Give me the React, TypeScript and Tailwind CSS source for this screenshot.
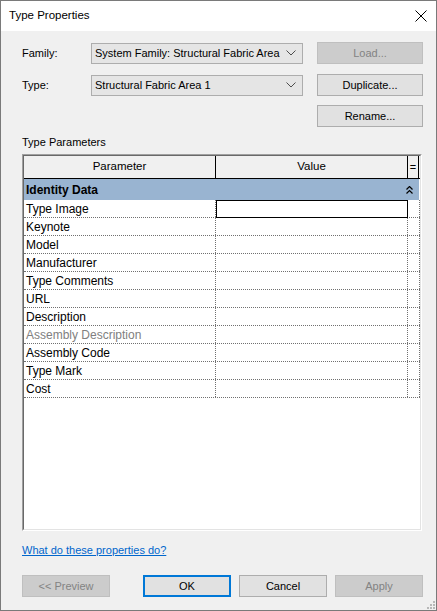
import React from 'react';

const font = { fontFamily: '"Liberation Sans", Arial, sans-serif' };

const rows = [
  'Type Image',
  'Keynote',
  'Model',
  'Manufacturer',
  'Type Comments',
  'URL',
  'Description',
  'Assembly Description',
  'Assembly Code',
  'Type Mark',
  'Cost',
];

const Chevron = () => (
  <svg width="10" height="6" viewBox="0 0 10 6" className="shrink-0">
    <path d="M0.5 0.5 L5 5 L9.5 0.5" fill="none" stroke="#4d4d4d" strokeWidth="1" />
  </svg>
);

const Combo = ({ value }: { value: string }) => (
  <div className="flex h-[21px] w-[212px] items-center justify-between border border-[#adadad] bg-[#e5e5e5] pl-[3px] pr-[6px] text-[11px] text-black">
    <span className="truncate">{value}</span>
    <Chevron />
  </div>
);

const Btn = ({
  label,
  disabled,
  primary,
  className = '',
}: {
  label: string;
  disabled?: boolean;
  primary?: boolean;
  className?: string;
}) => (
  <div
    className={`flex h-[22px] items-center justify-center text-[11px] ${
      disabled
        ? 'border border-[#bfbfbf] bg-[#cccccc] text-[#838383]'
        : primary
        ? 'border-2 border-[#0078d7] bg-[#e1e1e1] text-black'
        : 'border border-[#adadad] bg-[#e1e1e1] text-black'
    } ${className}`}
  >
    {label}
  </div>
);

export default function App() {
  return (
    <div
      className="flex h-[611px] w-[437px] flex-col border border-[#7a7a7a] bg-[#f0f0f0] text-[11px] text-black"
      style={font}
    >
      {/* title bar */}
      <div className="flex h-[30px] shrink-0 items-center justify-between bg-white pl-[8px] pr-[8px]">
        <span className="text-[11.5px]">Type Properties</span>
        <svg width="12" height="12" viewBox="0 0 12 12" className="mr-[1px]">
          <path d="M0.5 0.5 L11.5 11.5 M11.5 0.5 L0.5 11.5" stroke="#000" strokeWidth="1" />
        </svg>
      </div>

      <div className="flex flex-1 flex-col pl-[21px] pr-[13px] pt-[11px]">
        {/* family / type rows */}
        <div className="flex h-[22px] items-center">
          <span className="w-[69px]">Family:</span>
          <Combo value="System Family: Structural Fabric Area" />
          <Btn label="Load..." disabled className="ml-[14px] w-[106px]" />
        </div>
        <div className="mt-[10px] flex h-[22px] items-center">
          <span className="w-[69px]">Type:</span>
          <Combo value="Structural Fabric Area 1" />
          <Btn label="Duplicate..." className="ml-[14px] w-[106px]" />
        </div>
        <div className="mt-[9px] flex h-[22px] justify-end">
          <Btn label="Rename..." className="w-[106px]" />
        </div>

        <div className="mt-[7px] h-[16px] leading-[16px]">Type Parameters</div>

        {/* parameter grid */}
        <div className="mt-[4px] flex h-[377px] w-[400px] flex-col border border-t-[#a0a0a0] border-l-[#a0a0a0] border-r-white border-b-white">
          <div className="flex flex-1 flex-col border border-t-[#696969] border-l-[#696969] border-r-[#e3e3e3] border-b-[#e3e3e3] bg-white text-[12px]">
            <div className="flex h-[23px] border-b border-black bg-[#f0f0f0] text-[11.5px]">
              <div className="flex w-[192px] items-center justify-center border-r border-black">Parameter</div>
              <div className="flex w-[192px] items-center justify-center border-r border-black">Value</div>
              <div className="flex w-[11px] items-center justify-center border-r border-black text-[11px]">=</div>
            </div>
            <div className="flex h-[21px] w-[395px] items-center justify-between bg-[#99b4d1] pl-[2px] pr-[6px] font-bold">
              <span>Identity Data</span>
              <svg width="7" height="8" viewBox="0 0 7 8">
                <path d="M0.5 3.5 L3.5 0.5 L6.5 3.5 M0.5 7.5 L3.5 4.5 L6.5 7.5" fill="none" stroke="#000" strokeWidth="1.2" />
              </svg>
            </div>
            {rows.map((r, i) => (
              <div key={r} className="flex h-[18px] w-[396px] border-b border-dotted border-[#707070]">
                <div
                  className={`flex w-[192px] items-center border-r border-dotted border-[#707070] pl-[2px] ${
                    r === 'Assembly Description' ? 'text-[#808080]' : 'text-black'
                  }`}
                >
                  {r}
                </div>
                <div className="w-[192px] border-r border-dotted border-[#707070]">
                  {i === 0 && <div className="-mr-px h-[18px] border border-black" />}
                </div>
                <div className="w-[12px] border-r border-dotted border-[#707070]" />
              </div>
            ))}
          </div>
        </div>

        <div className="mt-[11px] h-[16px] leading-[16px]">
          <span className="text-[#0066cc] underline">What do these properties do?</span>
        </div>

        <div className="mt-[17px] flex items-center justify-between">
          <Btn label="<< Preview" disabled className="w-[88px]" />
          <div className="flex gap-[8px]">
            <Btn label="OK" primary className="w-[88px]" />
            <Btn label="Cancel" className="w-[88px]" />
            <Btn label="Apply" disabled className="w-[88px]" />
          </div>
        </div>

        <div className="flex flex-1 items-end justify-end -mr-[12px] pb-[1px]">
          <svg width="8" height="8" viewBox="0 0 8 8">
            <rect x="6" y="0" width="2" height="2" fill="#b8b8b8" />
            <rect x="3" y="3" width="2" height="2" fill="#b8b8b8" />
            <rect x="6" y="3" width="2" height="2" fill="#b8b8b8" />
            <rect x="0" y="6" width="2" height="2" fill="#b8b8b8" />
            <rect x="3" y="6" width="2" height="2" fill="#b8b8b8" />
            <rect x="6" y="6" width="2" height="2" fill="#b8b8b8" />
          </svg>
        </div>
      </div>
    </div>
  );
}
